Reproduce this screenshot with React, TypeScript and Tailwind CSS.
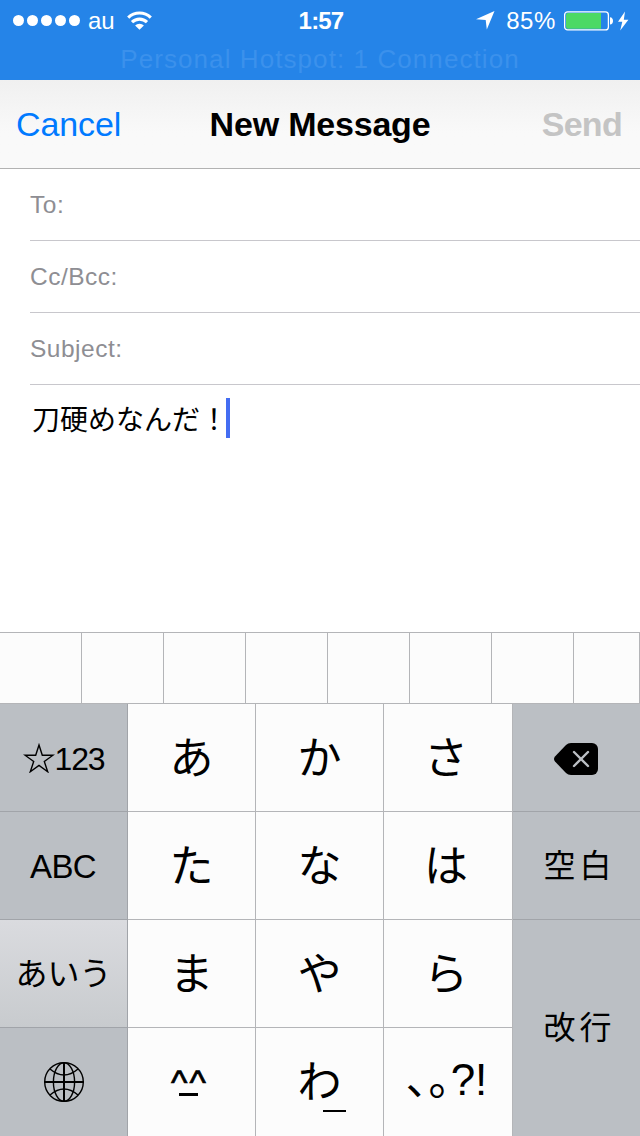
import clsx from "clsx";
import type { ReactNode } from "react";

const latin = "font-['Liberation_Sans','Noto_Sans_CJK_JP',sans-serif]";
const kana = "font-['Noto_Sans_CJK_JP',sans-serif]";

function StatusBar() {
  return (
    <header className="h-20 bg-[#2584e8] text-white">
      <div className="flex h-10 items-center justify-between pl-[13px] pr-[11px]">
        <div className="flex w-[220px] items-center">
          <div className="flex gap-[3px]">
            {[0, 1, 2, 3, 4].map((dot) => (
              <span key={dot} className="size-[11px] rounded-full bg-white" />
            ))}
          </div>
          <span className="ml-2 pt-px text-[24px] leading-6">au</span>
          <svg className="ml-3" width="25" height="19" viewBox="0 0 25 19">
            <g fill="none" stroke="#fff" strokeWidth="3.1">
              <path d="M1.2 6.6a16.2 16.2 0 0 1 22.6 0" />
              <path d="M5 11.2a10.6 10.6 0 0 1 15 0" />
            </g>
            <path d="M12.5 18.8 8.1 14.6a6 6 0 0 1 8.8 0Z" fill="#fff" />
          </svg>
        </div>
        <span className="pt-px text-[24px] font-bold leading-6 tracking-[-0.8px]">
          1:57
        </span>
        <div className="flex w-[220px] items-center justify-end">
          <svg className="mt-px" width="19" height="19" viewBox="0 0 19 19" fill="#fff">
            <path d="M18.5 0 10.8 18.5 9.7 9.1 0 8.3Z" />
          </svg>
          <span className="ml-[11px] pt-px text-[24px] leading-6 tracking-[0.6px]">
            85%
          </span>
          <svg className="ml-[8px] mt-px" width="65" height="20" viewBox="0 0 65 20">
            <rect x=".6" y=".9" width="43.8" height="18" rx="3" fill="none" stroke="#fff" strokeWidth="1.3" />
            <path d="M2 4a2 2 0 0 1 2-2h33v15.8H4a2 2 0 0 1-2-2Z" fill="#4cd964" />
            <path d="M46 6.2c4 0 4 7.4 0 7.4Z" fill="#fff" />
            <path d="M61 .5 54 10.8h4.3L56.2 19.5l8.2-10.8h-4.6Z" fill="#fff" />
          </svg>
        </div>
      </div>
      <p className="pt-[5px] text-center text-[26px] leading-7 tracking-[1.08px] text-[#3b91ec]">
        Personal Hotspot: 1 Connection
      </p>
    </header>
  );
}

function Field({ label }: { label: string }) {
  return (
    <div className="ml-[30px] flex h-[72px] items-center border-b border-[#c8c7cc] text-[24.5px] leading-7 tracking-[0.5px] text-[#8e8e93]">
      {label}
    </div>
  );
}

function Key({
  children,
  dark,
  className,
}: {
  children: ReactNode;
  dark?: boolean;
  className?: string;
}) {
  return (
    <div
      className={clsx(
        "flex items-center justify-center border-b border-r",
        dark ? "border-[#a1a4a9] text-[32px]" : "border-[#b4b5b8] bg-[#fcfcfc] text-[44px]",
        className
      )}
    >
      {children}
    </div>
  );
}

function Kana({ children, className }: { children: string; className?: string }) {
  return (
    <Key className={className}>
      <span className={clsx(kana, "pb-1.5 leading-none")}>{children}</span>
    </Key>
  );
}

function DeleteIcon() {
  return (
    <svg width="44" height="32" viewBox="0 0 44 32">
      <path
        d="M17 0h21a6 6 0 0 1 6 6v20a6 6 0 0 1-6 6H17q-3 0-5-2L1 18.5Q-1 16 1 13.5L12 2q2-2 5-2Z"
        fill="#000"
      />
      <path d="m20 9 14 14M34 9 20 23" stroke="#bbbfc4" strokeWidth="2.4" strokeLinecap="round" />
    </svg>
  );
}

function GlobeIcon() {
  return (
    <svg width="40" height="40" viewBox="0 0 40 40" fill="none" stroke="#000" strokeWidth="1.4">
      <circle cx="20" cy="20" r="19.3" />
      <ellipse cx="20" cy="20" rx="10.6" ry="19.3" />
      <path d="M20 0v40M0 20h40" strokeWidth="2" />
      <path d="M6 7q14 12 28 0M6 33q14-12 28 0" />
    </svg>
  );
}

function Keyboard() {
  return (
    <div className="grid h-[432px] grid-cols-[128px_128px_128px_129px_127px] grid-rows-4 bg-[#bbbfc4]">
      <Key dark>
        <svg className="mt-px" width="32" height="30" viewBox="0 0 31 30" fill="none" stroke="#000" strokeWidth="1.4">
          <path d="m15.5 2 3.3 10.2h10.7l-8.7 6.3 3.4 10.2-8.7-6.3-8.7 6.3 3.4-10.2-8.7-6.3h10.7Z" />
        </svg>
        <span className="pt-0.5 tracking-[-1.2px]">123</span>
      </Key>
      <Kana>あ</Kana>
      <Kana>か</Kana>
      <Kana className="pr-1">さ</Kana>
      <Key dark className="border-r-0 pr-0.5 pt-0.5">
        <DeleteIcon />
      </Key>

      <Key dark className="pr-px pt-0.5">
        <span className="text-[33px] tracking-[-0.6px]">ABC</span>
      </Key>
      <Kana>た</Kana>
      <Kana>な</Kana>
      <Kana className="pr-1">は</Kana>
      <Key dark className="border-r-0">
        <span className={clsx(kana, "pb-1.5 pl-1.5 leading-none tracking-[4px]")}>空白</span>
      </Key>

      <Key dark className="bg-linear-to-b from-[#dadbdf] to-[#c8cbce]">
        <span className={clsx(kana, "pb-1.5 leading-none")}>あいう</span>
      </Key>
      <Kana>ま</Kana>
      <Kana>や</Kana>
      <Kana className="pr-1">ら</Kana>
      <Key dark className="row-span-2 border-b-0 border-r-0">
        <span className={clsx(kana, "pb-1.5 pl-1.5 leading-none tracking-[4px]")}>改行</span>
      </Key>

      <Key dark className="border-b-0">
        <GlobeIcon />
      </Key>
      <Key className="border-b-0">
        <div className="flex flex-col items-center pb-1 pr-1">
          <span className="h-7 text-[35px] leading-9 tracking-[2px] [-webkit-text-stroke:0.7px_#000]">^^</span>
          <span className="mr-px h-[3px] w-[19px] bg-black" />
        </div>
      </Key>
      <Key className="border-b-0">
        <span className={clsx(kana, "relative pb-1.5 leading-none")}>
          わ
          <span className="absolute -right-1 bottom-[-5px] h-0.5 w-[23px] bg-black" />
        </span>
      </Key>
      <Key className="border-b-0 pr-0.5">
        <span className={clsx(kana, "pb-3 leading-none")}>､｡</span>
        <span className="pb-1 text-[44px] leading-none">?!</span>
      </Key>
    </div>
  );
}

export default function App() {
  return (
    <div className={clsx(latin, "flex h-[1136px] w-[640px] flex-col overflow-hidden bg-white text-black")}>
      <StatusBar />
      <nav className="flex h-[89px] items-center justify-between border-b border-[#b2b2b2] bg-linear-to-b from-[#f0f0f0] to-[#f9f9f9] to-60% pl-4 pr-[18px] text-[34px]">
        <span className="w-[120px] tracking-[-0.1px] text-[#007aff]">Cancel</span>
        <h1 className="pl-0.5 font-bold tracking-[-0.2px]">New Message</h1>
        <span className="w-[120px] text-right font-bold tracking-[-0.7px] text-[#c4c4c4]">
          Send
        </span>
      </nav>
      <Field label="To:" />
      <Field label="Cc/Bcc:" />
      <Field label="Subject:" />
      <div className="flex flex-1 items-start pl-8 pt-[13px]">
        <p className={clsx(kana, "w-[194px] whitespace-nowrap text-[28px] leading-10")}>
          刀硬めなんだ！
        </p>
        <span className="h-10 w-1 bg-[#446df2]" />
      </div>
      <div className="flex h-[72px] border-y border-[#b4b5b8] bg-[#fcfcfc]">
        {[0, 1, 2, 3, 4, 5, 6].map((cell) => (
          <div key={cell} className="w-[82px] shrink-0 border-r border-[#b4b5b8]" />
        ))}
        <div className="flex-1 border-r border-[#b4b5b8]" />
      </div>
      <Keyboard />
    </div>
  );
}
